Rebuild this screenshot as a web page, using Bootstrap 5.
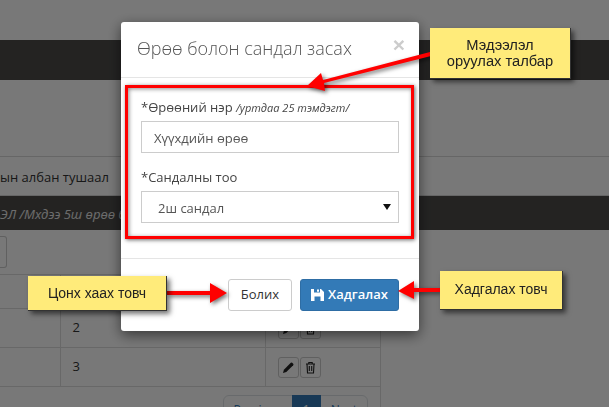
<!DOCTYPE html>
<html lang="mn">
<head>
    <meta charset="UTF-8">
    <meta name="viewport" content="width=device-width, initial-scale=1.0">
    <title>Өрөө болон сандал засах</title>
    <link href="https://cdn.jsdelivr.net/npm/bootstrap@5.3.0/dist/css/bootstrap.min.css" rel="stylesheet">
    <style>
        html, body { height: 407px; overflow: hidden; }
        body { font-family: "Open Sans", "Noto Sans", sans-serif; font-size: 13px; color: #333; background: #fff; }

        /* page behind the dialog */
        .page-bar { height: 40px; margin-top: 40px; background: #4d4c4a; }
        .page-heading { height: 40px; margin-top: 76px; padding-top: 11px; border-top: 1px solid #d8d8d8; border-bottom: 1px solid #d8d8d8; white-space: nowrap; }
        .page-strip { height: 34px; background: #4d4c4a; color: #e8e8e8; font-style: italic; padding-top: 9px; white-space: nowrap; }
        .page-stub { width: 7px; height: 32px; margin-top: 6px; border: 1px solid #ccc; border-left: 0; border-radius: 0 3px 3px 0; }
        .page-list { width: 381px; height: 133px; margin-top: 6px; border-right: 1px solid #ddd; }
        .room-table { width: 380px; table-layout: fixed; margin: 0; border-top: 1px solid #ddd; }
        .room-table td { padding: 0 12px; vertical-align: middle; border-color: #ddd; border-bottom: 1px solid #ddd; }
        .room-table td + td { border-left: 1px solid #ddd; }
        .row-head td { height: 34px; }
        .row-body td { height: 39px; }
        .tool-row { gap: 1px; }
        .tool-btn { width: 21px; height: 21px; display: flex; align-items: center; justify-content: center; border: 1px solid #ccc; border-radius: 3px; background: #fff; }
        .pager-wrap { width: 368px; margin-top: 8px; }
        .pager-wrap .pagination { --bs-pagination-font-size: 12px; --bs-pagination-padding-x: 10px; --bs-pagination-padding-y: 5px; --bs-pagination-color: #337ab7; --bs-pagination-active-bg: #337ab7; --bs-pagination-active-border-color: #337ab7; margin: 0; }

        /* dialog */
        .dim-layer { position: fixed; left: 0; top: 0; right: 0; bottom: 0; z-index: 1050; background: rgba(0,0,0,.53); }
        .edit-dialog { width: 298px; margin: 22px 0 0 121px; }
        .edit-dialog .modal-content { height: 309px; border: 0; border-radius: 3px; box-shadow: 0 4px 14px rgba(0,0,0,.55); }
        .edit-dialog .modal-header { height: 56px; padding: 0 16px; border-bottom: 1px solid #e5e5e5; border-radius: 0; align-items: flex-start; }
        .dialog-title { font-size: 18px; font-weight: 300; color: #555; margin: 16px 0 0; white-space: nowrap; }
        .dialog-close { font-family: "Liberation Sans", sans-serif; font-size: 21px; line-height: 21px; font-weight: 700; color: #ccc; margin: 12px -6px 0 auto; padding: 0 4px 0 0; border: 0; background: none; }
        .marked-body { flex: 0 0 auto; height: 154px; margin: 7px 5px 0 4px; padding: 10px 12px 0 13px; border: 3px solid #f00; box-shadow: 1px 1px 4px rgba(0,0,0,.6), inset 1px 1px 4px rgba(0,0,0,.45); }
        .field-label { display: block; height: 19px; margin: 0 0 4px; line-height: 19px; color: #444; white-space: nowrap; }
        .field-label em { font-size: 11px; }
        .edit-dialog .form-control, .edit-dialog .form-select { height: 32px; border: 1px solid #ccc; border-radius: 0; color: #555; font-size: 13px; box-shadow: none; }
        .edit-dialog .form-control { padding: 2px 12px 0; margin-bottom: 15px; }
        .edit-dialog .form-select { padding: 3px 16px 0; background-size: 8px 6px; background-position: right 7px center; background-image: url("data:image/svg+xml,%3csvg xmlns='http://www.w3.org/2000/svg' viewBox='0 0 8 6'%3e%3cpath d='M0 0h8L4 6z' fill='%23111'/%3e%3c/svg%3e"); }
        .edit-dialog .modal-footer { margin-top: 19px; padding: 20px; gap: 8px; border-top: 1px solid #e5e5e5; }
        .edit-dialog .modal-footer > * { margin: 0; }
        .btn-cancel, .btn-save { height: 32px; padding: 0; font-size: 13px; border-radius: 3px; }
        .btn-cancel { width: 64px; color: #333; background: #fff; border: 1px solid #ccc; }
        .btn-save { width: 99px; color: #fff; background: #337ab7; border: 1px solid #2e6da4; font-weight: 600; }

        /* annotations */
        .note { position: absolute; z-index: 1060; display: flex; align-items: center; justify-content: center; text-align: center; font-family: "Liberation Sans", sans-serif; font-size: 14px; line-height: 16px; color: #222; background: #ffeb7a; border: 1px solid #333; border-width: 0 1px 1px 0; box-shadow: 3px 3px 5px rgba(0,0,0,.55); }
        .note-fields { left: 430px; top: 28px; width: 141px; height: 51px; font-size: 14.7px; }
        .note-close { left: 28px; top: 276px; width: 139px; height: 35px; }
        .note-save { left: 440px; top: 271px; width: 123px; height: 39px; padding-bottom: 3px; }
        .arrows { position: absolute; left: 0; top: 0; z-index: 1059; filter: drop-shadow(2px 2px 2px rgba(0,0,0,.55)); }
    </style>
</head>
<body>
    <!-- хуудасны дэвсгэр -->
    <div class="page-bar"></div>
    <div class="page-heading">ын албан тушаал</div>
    <div class="page-strip">ЭЛ /Мхдээ 5ш өрөө бүтэй/</div>
    <div class="page-stub"></div>
    <div class="page-list">
        <table class="room-table">
            <colgroup><col style="width:60px"><col style="width:205px"><col></colgroup>
            <tr class="row-head"><td></td><td></td><td></td></tr>
            <tr class="row-body">
                <td></td><td>2</td>
                <td>
                    <div class="d-flex tool-row">
                        <span class="tool-btn">
                            <svg width="13" height="13" viewBox="0 0 13 13"><path d="M1 12l.9-3.300L8.800 1.800a1 1 0 0 1 1.400 0l1 1a1 1 0 0 1 0 1.400L4.300 11.100z" fill="#222"/></svg>
                        </span>
                        <span class="tool-btn">
                            <svg width="13" height="13" viewBox="0 0 13 13"><path d="M2 3h9M4.800 3V1.500h3.400V3M3 3l.5 9h6l.5-9M5.300 5v5M7.700 5v5" fill="none" stroke="#222" stroke-width="1.100"/></svg>
                        </span>
                    </div>
                </td>
            </tr>
            <tr class="row-body">
                <td></td><td>3</td>
                <td>
                    <div class="d-flex tool-row">
                        <span class="tool-btn">
                            <svg width="13" height="13" viewBox="0 0 13 13"><path d="M1 12l.9-3.300L8.800 1.800a1 1 0 0 1 1.400 0l1 1a1 1 0 0 1 0 1.400L4.300 11.100z" fill="#222"/></svg>
                        </span>
                        <span class="tool-btn">
                            <svg width="13" height="13" viewBox="0 0 13 13"><path d="M2 3h9M4.800 3V1.500h3.400V3M3 3l.5 9h6l.5-9M5.300 5v5M7.700 5v5" fill="none" stroke="#222" stroke-width="1.100"/></svg>
                        </span>
                    </div>
                </td>
            </tr>
        </table>
        <div class="pager-wrap">
            <ul class="pagination justify-content-end">
                <li class="page-item"><a class="page-link" href="#">Previous</a></li>
                <li class="page-item active"><a class="page-link" href="#">1</a></li>
                <li class="page-item"><a class="page-link" href="#">Next</a></li>
            </ul>
        </div>
    </div>

    <!-- цонх -->
    <div class="dim-layer"></div>
    <div class="modal d-block">
        <div class="edit-dialog">
            <div class="modal-content">
                <div class="modal-header">
                    <h4 class="dialog-title">Өрөө болон сандал засах</h4>
                    <button type="button" class="dialog-close">×</button>
                </div>
                <form class="marked-body">
                    <label class="field-label">*Өрөөний нэр <em>/уртдаа 25 тэмдэгт/</em></label>
                    <input type="text" class="form-control" value="Хүүхдийн өрөө">
                    <label class="field-label">*Сандалны тоо</label>
                    <select class="form-select"><option>2ш сандал</option></select>
                </form>
                <div class="modal-footer">
                    <button type="button" class="btn btn-cancel">Болих</button>
                    <button type="button" class="btn btn-save d-inline-flex align-items-center justify-content-center gap-1">
                        <svg width="13" height="12" viewBox="0 0 13 12"><path d="M0 0h3v3.500h6V0h1l3 3v9H0zM6 .5h2v2.300H6zM3.500 7.500V12h6V7.500z" fill="#fff" fill-rule="evenodd"/></svg>
                        Хадгалах
                    </button>
                </div>
            </div>
        </div>
    </div>

    <!-- тайлбарын сумнууд -->
    <svg class="arrows" width="609" height="407" viewBox="0 0 609 407">
        <g fill="#f00">
            <path d="M430 52l1 4-107 27 1 8-18-5 14-13 2 7z"/>
            <path d="M167 291h43v-8l17 10-17 10v-8h-43z"/>
            <path d="M440 288v4h-26v7l-16-8 16-10v7z"/>
        </g>
    </svg>
    <div class="note note-fields">Мэдээлэл<br>оруулах талбар</div>
    <div class="note note-close">Цонх хаах товч</div>
    <div class="note note-save">Хадгалах товч</div>

    <script src="https://cdn.jsdelivr.net/npm/bootstrap@5.3.0/dist/js/bootstrap.bundle.min.js"></script>
</body>
</html>
